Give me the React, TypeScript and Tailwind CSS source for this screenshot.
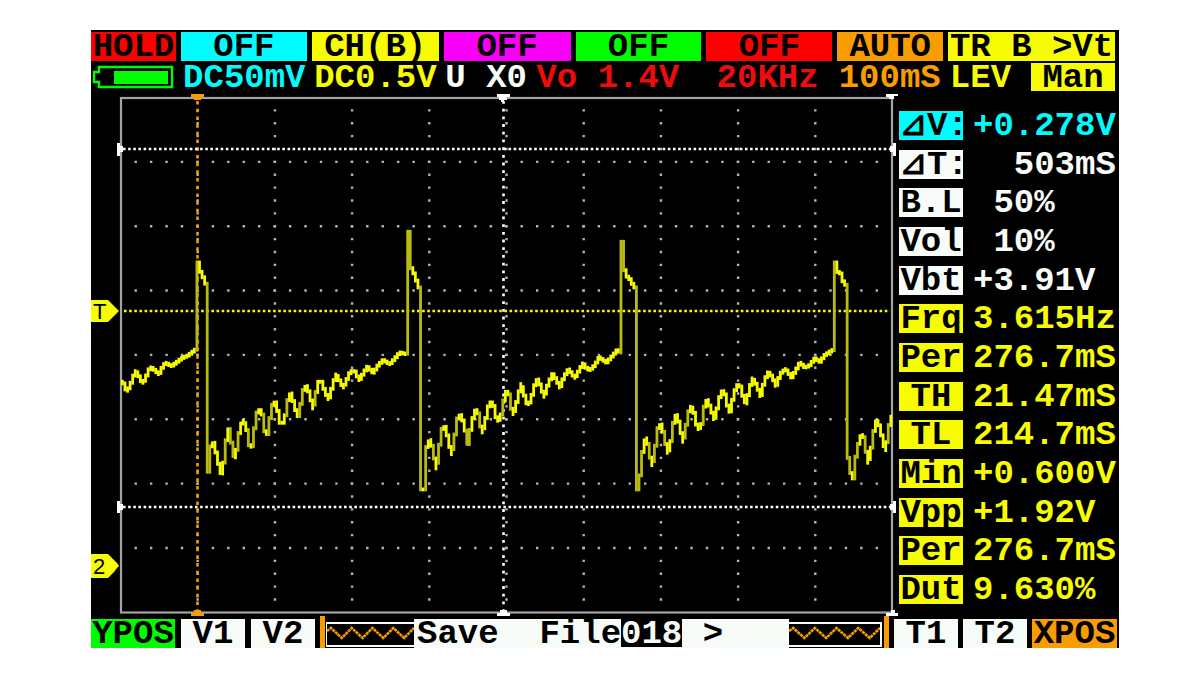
import React from 'react';
import clsx from 'clsx';

type Point = [number, number];

const FONT = "font-['Liberation_Mono','DejaVu_Sans_Mono',monospace]";

const channels = [
  { label: 'HOLD', className: 'bg-[#fb0000]' },
  { label: 'OFF', className: 'bg-[#00fcfc]' },
  { label: 'CH(B)', className: 'bg-[#f8fc00]' },
  { label: 'OFF', className: 'bg-[#f800f8]' },
  { label: 'OFF', className: 'bg-[#00fc00]' },
  { label: 'OFF', className: 'bg-[#fb0000]' },
  { label: 'AUTO', className: 'bg-[#f89c00]' },
  { label: 'TR B >Vt', className: 'bg-[#f8fc00]' },
];

const readings = [
  { label: '⊿V:', value: '+0.278V', box: 'bg-[#00fcfc]', text: 'text-[#00fcfc]' },
  { label: '⊿T:', value: '  503mS', box: 'bg-[#f8fcf8]', text: 'text-[#f8fcf8]' },
  { label: 'B.L', value: ' 50%', box: 'bg-[#f8fcf8]', text: 'text-[#f8fcf8]' },
  { label: 'Vol', value: ' 10%', box: 'bg-[#f8fcf8]', text: 'text-[#f8fcf8]' },
  { label: 'Vbt', value: '+3.91V', box: 'bg-[#f8fcf8]', text: 'text-[#f8fcf8]' },
  { label: 'Frq', value: '3.615Hz', box: 'bg-[#f8fc00]', text: 'text-[#f8fc00]' },
  { label: 'Per', value: '276.7mS', box: 'bg-[#f8fc00]', text: 'text-[#f8fc00]' },
  { label: 'TH', value: '21.47mS', box: 'bg-[#f8fc00]', text: 'text-[#f8fc00]' },
  { label: 'TL', value: '214.7mS', box: 'bg-[#f8fc00]', text: 'text-[#f8fc00]' },
  { label: 'Min', value: '+0.600V', box: 'bg-[#f8fc00]', text: 'text-[#f8fc00]' },
  { label: 'Vpp', value: '+1.92V', box: 'bg-[#f8fc00]', text: 'text-[#f8fc00]' },
  { label: 'Per', value: '276.7mS', box: 'bg-[#f8fc00]', text: 'text-[#f8fc00]' },
  { label: 'Dut', value: '9.630%', box: 'bg-[#f8fc00]', text: 'text-[#f8fc00]' },
];

// Captured samples, in thirds of a unit, one block per sweep
const sweepA: Point[] = [
  [123, 545], [131, 550], [140, 572], [150, 560], [158, 535], [167, 513], [178, 530], [187, 548], [197, 537],
  [204, 512], [213, 502], [222, 508], [237, 522], [247, 502], [257, 488], [275, 498], [290, 487], [305, 475],
  [325, 466], [345, 450], [353, 445], [354, 187], [361, 190], [362, 215], [370, 232], [378, 252], [382, 255],
  [383, 815], [389, 815], [390, 742], [402, 728], [410, 765], [418, 800], [424, 820], [432, 785], [438, 725],
  [447, 687], [455, 730], [460, 765], [466, 772], [475, 720], [480, 680], [490, 662], [500, 685], [508, 735],
  [516, 740], [523, 690], [532, 635], [540, 630], [548, 645], [555, 695], [563, 702], [570, 655], [577, 615],
  [586, 607], [594, 635], [600, 668], [610, 668], [618, 640], [626, 588], [635, 580], [643, 620], [655, 648],
  [663, 610], [670, 570], [680, 558], [690, 585], [699, 625], [708, 580], [716, 545], [725, 545], [735, 575],
  [746, 597], [757, 560], [768, 523], [778, 540], [790, 562], [800, 540], [812, 513], [824, 513], [838, 540],
  [850, 520], [862, 500], [880, 518], [895, 495], [910, 480], [930, 492], [945, 475], [960, 457], [978, 462],
  [983, 455], [984, 95], [991, 95], [992, 200], [1000, 215], [1008, 235], [1015, 262], [1020, 262],
];

const sweepB: Point[] = [
  [32, 232], [33, 838], [43, 838], [44, 757], [52, 700], [62, 690], [70, 725], [79, 775], [88, 710], [97, 655],
  [107, 650], [115, 690], [125, 732], [135, 675], [143, 625], [152, 615], [162, 640], [174, 702], [185, 640],
  [195, 602], [203, 600], [210, 640], [217, 667], [230, 615], [238, 577], [249, 577], [256, 615], [263, 632],
  [272, 625], [280, 580], [287, 545], [296, 545], [303, 590], [310, 612], [322, 570], [333, 522], [343, 555],
  [352, 582], [362, 575], [372, 530], [383, 508], [393, 530], [402, 560], [415, 520], [428, 492], [440, 510],
  [450, 532], [462, 500], [476, 478], [485, 490], [495, 503], [508, 480], [519, 460], [530, 475], [540, 480],
  [555, 465], [568, 442], [590, 457], [605, 440], [622, 420], [632, 427], [635, 425], [636, 95], [643, 95],
  [644, 180], [652, 200], [665, 212], [670, 232], [675, 232], [676, 838], [685, 838], [688, 820], [695, 750],
  [702, 695], [711, 685], [718, 730], [727, 765], [737, 705], [745, 650], [755, 643], [763, 680], [773, 728],
  [782, 700], [790, 640], [799, 615], [808, 640], [819, 695], [830, 640], [838, 598],
];

const sweepC: Point[] = [
  [0, 500], [10, 505], [17, 545], [25, 567], [35, 555], [43, 500], [52, 480], [62, 505], [73, 537], [83, 500],
  [93, 455], [103, 453], [110, 490], [120, 515], [130, 470], [140, 435], [150, 435], [158, 465], [168, 490],
  [178, 450], [187, 415], [200, 435], [212, 468], [224, 420], [235, 397], [247, 410], [258, 437], [272, 400],
  [287, 387], [305, 412], [318, 390], [330, 368], [345, 382], [358, 377], [375, 355], [390, 365], [405, 345],
  [420, 335], [432, 328], [434, 325], [435, 67], [442, 67], [443, 95], [452, 100], [460, 125], [468, 135],
  [469, 635], [477, 660], [485, 715], [493, 715], [498, 650], [510, 590], [520, 585], [527, 620], [533, 668],
  [542, 640], [550, 580], [560, 543], [570, 560], [580, 610], [587, 630], [593, 590], [602, 530],
];

const place = (points: Point[], dx: number, dy: number): Point[] =>
  points.map(([x, y]) => [dx + x / 3, dy + y / 3]);

const samples: Point[] = [...place(sweepA, 80, 200), ...place(sweepB, 410, 210), ...place(sweepC, 690, 240)];

const CELL = 2.57;

const levelAt = (x: number) => {
  const i = samples.findIndex((p) => p[0] >= x);
  if (i <= 0) return samples[i === 0 ? 0 : samples.length - 1][1];
  const [x0, y0] = samples[i - 1];
  const [x1, y1] = samples[i];
  return y0 + ((y1 - y0) * (x - x0)) / (x1 - x0);
};

// One bar per display column, spanning every level the signal passes there
const columns = Array.from({ length: 300 }, (_, i) => {
  const x = 121 + i * CELL;
  const levels = [
    levelAt(x),
    levelAt(x + CELL),
    ...samples.filter((p) => p[0] > x && p[0] < x + CELL).map((p) => p[1]),
  ];
  const top = Math.min(...levels);
  return { x, top, height: Math.max(...levels) - top };
});

const gridX = Array.from({ length: 9 }, (_, i) => 120.5 + 77.2 * (i + 1));
const gridY = Array.from({ length: 7 }, (_, i) => 97.5 + 64.35 * (i + 1));

const Plot: React.FC = () => (
  <svg viewBox="91 92 807 526" className="block w-full h-auto" role="img" aria-label="Waveform">
    {/* graticule */}
    <g stroke="#b4b4b4" strokeWidth="2.4" fill="none">
      {gridX.map((x) => (
        <path key={x} d={`M${x} 109.2V606`} strokeDasharray="2.4 10.47" />
      ))}
      {gridY.map((y) => (
        <path key={y} d={`M134.5 ${y}H886`} strokeDasharray="2.4 13.04" />
      ))}
    </g>
    <rect x="121" y="98" width="771" height="514.5" fill="none" stroke="#a4a4a4" strokeWidth="2.2" />

    {/* cursors */}
    <g fill="none" strokeWidth="2.6">
      <path d="M197.5 101V612" stroke="#f89c00" strokeDasharray="3.6 4.1" />
      <path d="M503.5 101V612" stroke="#fff" strokeDasharray="2.8 4.9" />
      <path d="M123 149H892" stroke="#fff" strokeDasharray="2.6 2.54" />
      <path d="M123 507H892" stroke="#fff" strokeDasharray="2.6 2.54" />
      <path d="M124 311H890" stroke="#f8fc00" strokeDasharray="2.6 2.54" />
    </g>
    <path d="M191 94h13v3h-3v3h-7v-3h-3zM191 616h13v-3h-3v-3h-7v3h-3z" fill="#f89c00" />
    <g fill="#fff">
      <path d="M497 94h13v3h-3v3h-3v2h-3v-2h-2v-3h-2zM497 616h13v-3h-3v-3h-7v3h-3z" />
      <path d="M886 94h12v2h-4v3h-5v-2h-3zM886 616h12v-3h-3v-3h-4v3h-5z" />
      <path d="M117 143h3v3h3v6h-3v4h-3zM117 501h3v3h3v6h-3v3h-3z" />
      <path d="M896 143h-3v3h-3v6h3v4h3zM896 501h-3v3h-3v6h3v3h3z" />
    </g>

    <g>
      {columns.map((c) => (
        <rect
          key={c.x}
          x={c.x}
          y={c.top - 1.8}
          width="2.8"
          height={c.height + 3.8}
          fill={c.height > 12 ? '#b9bb12' : '#f8fc00'}
        />
      ))}
    </g>

    {/* level tags */}
    <path d="M91 300h17l3 3 3 3 3 3 2 2-2 2-3 3-3 3-3 3H91z" fill="#f8fc00" />
    <path d="M91 554h17l3 3 3 3 3 3 2 3-2 2-3 4-3 3-3 3H91z" fill="#f8fc00" />
    <g className="font-['Liberation_Sans',sans-serif] text-[22px] font-normal" fill="#000">
      <text x="93" y="319">T</text>
      <text x="93" y="574">2</text>
    </g>
  </svg>
);

const Battery: React.FC = () => (
  <svg viewBox="0 0 84 29" className="w-[84px] h-[29px]" role="img" aria-label="Battery">
    <path d="M8 4H81V24H8V19H3V9H8z" fill="none" stroke="#00fc00" strokeWidth="2.4" />
    <rect x="23" y="8" width="54" height="13" fill="#00fc00" />
  </svg>
);

const Ripple: React.FC<{ className?: string }> = ({ className }) => (
  <div className={clsx('mt-[3px] h-[25px] border-t-2 border-b-2 border-[#f8fcf8] bg-black', className)}>
    <svg viewBox="0 0 88 21" preserveAspectRatio="none" className="block w-full h-full" aria-hidden="true">
      <path
        d="M0 7L4 4L15 14L25 4L36 14L46 4L57 14L67 4L78 14L88 4"
        fill="none"
        stroke="#f89c00"
        strokeWidth="2.6"
        strokeDasharray="3 0.6"
      />
    </svg>
  </div>
);

const SoftKey: React.FC<{ label: string; className?: string }> = ({ label, className }) => (
  <button className={clsx('h-[29px] leading-[30px] text-center text-black', className)}>{label}</button>
);

const App: React.FC = () => {
  return (
    <div className="min-h-screen bg-white pt-[30px] pl-[91px] pr-[81px]">
      <main className={clsx('bg-black pt-[2px] text-[34px] font-bold whitespace-pre', FONT)}>
        <div className="grid grid-cols-[85fr_126fr_127fr_127fr_126fr_126fr_106fr_167fr] gap-x-[5px] pr-1">
          {channels.map((c, i) => (
            <SoftKey key={i} label={c.label} className={c.className} />
          ))}
        </div>

        <div className="mt-[2px] grid grid-cols-[85fr_126fr_126fr_86fr_171fr_121fr_106fr_167fr] gap-x-[5px] pr-1 h-[29px] leading-[30px]">
          <Battery />
          <span className="pl-[2px] text-[#00fcfc]">DC50mV</span>
          <span className="pl-[2px] text-[#f8fc00]">DC0.5V</span>
          <span className="pl-[2px] text-[#f8fcf8]">U X0</span>
          <span className="pl-[2px] text-[#ee0c0c]">Vo 1.4V</span>
          <span className="pl-[6px] text-[#ee0c0c]">20KHz</span>
          <span className="pl-[2px] text-[#f89c00]">100mS</span>
          <div className="flex justify-between pl-[2px] text-[#f8fc00]">
            <span>LEV</span>
            <button className="w-[84px] h-[28px] leading-[30px] bg-[#f8fc00] text-black">Man</button>
          </div>
        </div>

        <div className="flex">
          <div className="flex-1 min-w-0">
            <Plot />
          </div>
          <dl className="w-[221px] shrink-0 flex flex-col justify-between pl-px pt-[19px] pb-[14px]">
            {readings.map((r, i) => (
              <div key={i} className="flex gap-[10px] h-[29px] leading-[30px]">
                <dt className={clsx('w-16 text-center text-black', r.box)}>{r.label}</dt>
                <dd className={r.text}>{r.value}</dd>
              </div>
            ))}
          </dl>
        </div>

        <div className="flex pt-px pr-[2px] h-[30px]">
          <SoftKey label="YPOS" className="w-[84px] bg-[#00fc00]" />
          <SoftKey label="V1" className="ml-[6px] w-16 bg-[#f8fcf8]" />
          <SoftKey label="V2" className="ml-[6px] w-16 bg-[#f8fcf8]" />
          <div className="-mt-[3px] ml-[5px] w-[5px] bg-[#f89c00]" />
          <Ripple className="ml-px w-[88px] border-l" />
          <div className="flex-1 h-[29px] leading-[30px] pl-[3px] bg-[#f8fcf8] text-black flex">
            <span>Save  File</span>
            <span className="bg-black text-[#f8fcf8] h-[28px]">018</span>
            <span> {'>'}</span>
          </div>
          <Ripple className="w-[93px] border-r-2" />
          <div className="-mt-[3px] ml-[2px] w-[5px] bg-[#f89c00]" />
          <SoftKey label="T1" className="ml-[5px] w-16 bg-[#f8fcf8]" />
          <SoftKey label="T2" className="ml-[5px] w-16 bg-[#f8fcf8]" />
          <SoftKey label="XPOS" className="ml-[5px] w-[85px] bg-[#f89c00]" />
        </div>
      </main>
    </div>
  );
};

export default App;
